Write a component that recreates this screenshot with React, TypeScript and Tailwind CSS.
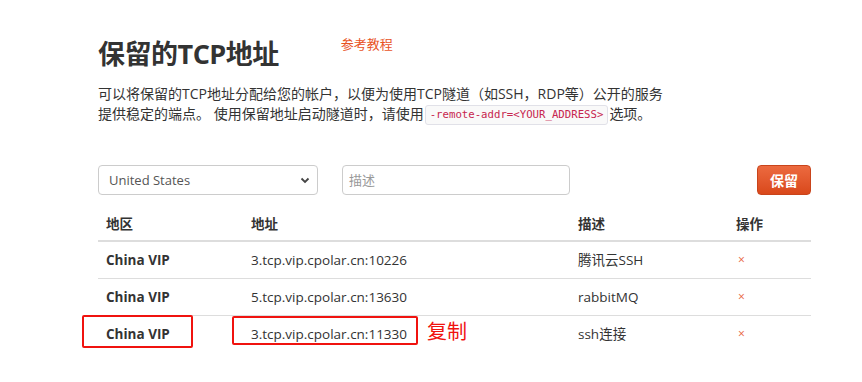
import React from 'react';

const rows = [
  { region: 'China VIP', addr: '3.tcp.vip.cpolar.cn:10226', desc: '腾讯云SSH' },
  { region: 'China VIP', addr: '5.tcp.vip.cpolar.cn:13630', desc: 'rabbitMQ' },
  { region: 'China VIP', addr: '3.tcp.vip.cpolar.cn:11330', desc: 'ssh连接', marked: true },
];

const font = { fontFamily: '"Open Sans", "Noto Sans CJK SC", sans-serif' };

export default function App() {
  return (
    <div className="w-[862px] h-[382px] bg-white text-[#333] overflow-hidden" style={font}>
      <div className="pl-[98px] pr-[51px] pt-[34px]">
        <div className="flex items-start">
          <h1 className="text-[27px] font-bold leading-[40px] tracking-[-0.5px] text-[#333]">保留的TCP地址</h1>
          <a className="ml-[62px] mt-[0px] text-[13px] leading-[20px] text-[#e8531f]">参考教程</a>
        </div>
        <p className="mt-[10px] text-[14px] leading-[20px] whitespace-nowrap">
          可以将保留的TCP地址分配给您的帐户，以便为使用TCP隧道（如SSH，RDP等）公开的服务
          <br />
          提供稳定的端点。 使用保留地址启动隧道时，请使用
          <code className="mx-[1px] px-[4px] py-0 text-[10.7px] leading-[18px] inline-block align-middle text-[#c7254e] bg-[#f9f9f9] border border-[#e1e1e8] rounded-[3px]" style={{ fontFamily: '"DejaVu Sans Mono", monospace' }}>
            -remote-addr=&lt;YOUR_ADDRESS&gt;
          </code>
          选项。
        </p>

        <div className="mt-[40px] flex items-center h-[30px]">
          <div className="relative w-[220px] h-[30px] border border-[#ccc] rounded-[4px] flex items-center pl-[10px] text-[13px] text-[#555]">
            United States
            <svg className="absolute right-[7px] top-[11px]" width="10" height="7" viewBox="0 0 10 7">
              <path d="M1.5 1.5 L5 5 L8.5 1.5" stroke="#444" strokeWidth="1.8" fill="none" />
            </svg>
          </div>
          <div className="ml-[24px] w-[228px] h-[30px] border border-[#ccc] rounded-[4px] flex items-center pl-[6px] text-[13px] text-[#999]">
            描述
          </div>
          <div className="flex-1" />
          <button className="w-[54px] h-[30px] rounded-[4px] bg-gradient-to-b from-[#ec6a3f] to-[#d9481a] text-white text-[14px] font-bold border border-[#c9441b]">
            保留
          </button>
        </div>

        <table className="mt-[12px] w-[713px] text-[13.5px] border-collapse">
          <thead>
            <tr className="h-[34px] border-b-2 border-[#ddd]">
              <th className="text-left font-bold pl-[8px] w-[153px]">地区</th>
              <th className="text-left font-bold w-[327px]">地址</th>
              <th className="text-left font-bold w-[158px]">描述</th>
              <th className="text-left font-bold">操作</th>
            </tr>
          </thead>
          <tbody>
            {rows.map((r, i) => (
              <tr key={i} className={`h-[37px] ${i < rows.length - 1 ? 'border-b border-[#ddd]' : ''}`}>
                <td className="pl-[8px] font-bold">
                  <span className={r.marked ? 'relative' : ''}>
                    {r.region}
                    {r.marked && (
                      <span className="absolute left-[-24px] top-[-10px] w-[111px] h-[33px] border-2 border-[#f0130f] rounded-[2px]" />
                    )}
                  </span>
                </td>
                <td>
                  <span className="relative">
                    {r.addr}
                    {r.marked && (
                      <>
                        <span className="absolute left-[-19px] top-[-9px] w-[186px] h-[29px] border-2 border-[#f0130f] rounded-[2px]" />
                        <span className="absolute left-[176px] top-[-8px] whitespace-nowrap text-[20px] text-[#f0130f]">复制</span>
                      </>
                    )}
                  </span>
                </td>
                <td>{r.desc}</td>
                <td className="pl-[2px] text-[12px] text-[#e8613a]">×</td>
              </tr>
            ))}
          </tbody>
        </table>
      </div>
    </div>
  );
}
